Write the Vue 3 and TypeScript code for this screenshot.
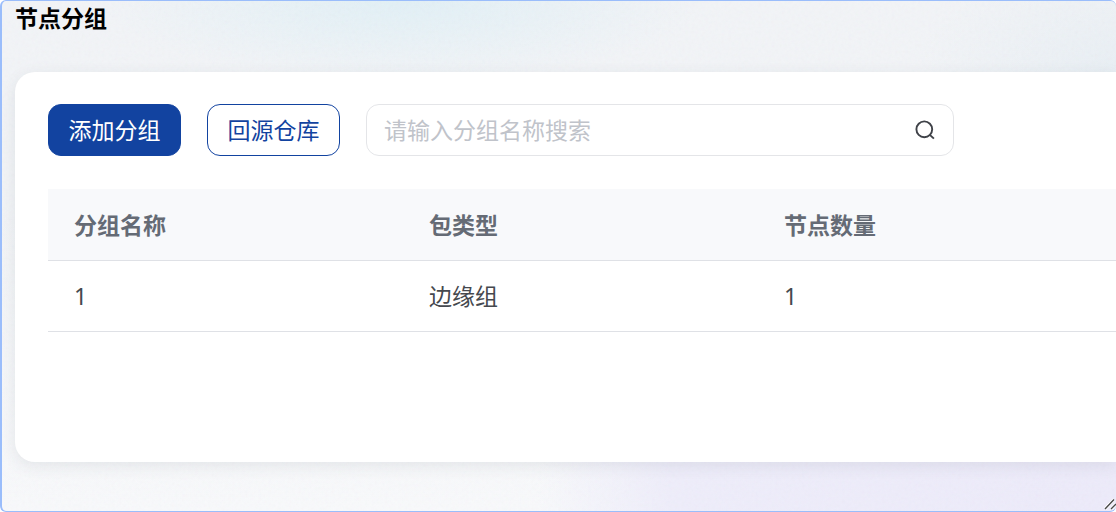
<script setup lang="ts">
import { ref, computed } from 'vue'

interface NodeGroup {
  name: string
  type: string
  count: number
}

const keyword = ref('')
const groups = ref<NodeGroup[]>([{ name: '1', type: '边缘组', count: 1 }])
const visibleGroups = computed(() =>
  groups.value.filter((group) => group.name.includes(keyword.value.trim())),
)
</script>

<template>
  <main class="frame">
    <svg class="grain" aria-hidden="true">
      <filter id="grain-filter">
        <feTurbulence type="fractalNoise" baseFrequency="0.3" numOctaves="2" seed="4" />
      </filter>
      <rect width="100%" height="100%" filter="url(#grain-filter)" />
    </svg>

    <h1 class="title">节点分组</h1>

    <section class="card">
      <form class="toolbar" @submit.prevent>
        <button class="btn primary" type="button">添加分组</button>
        <button class="btn" type="button">回源仓库</button>
        <div class="search">
          <input
            v-model="keyword"
            class="search-input"
            type="text"
            placeholder="请输入分组名称搜索"
            aria-label="请输入分组名称搜索"
          />
          <button class="search-btn" type="submit" aria-label="搜索">
            <svg width="20" height="20" viewBox="0 0 20 20" fill="none" stroke="#3f4248" stroke-width="1.9">
              <circle cx="9.3" cy="9.3" r="7.9" />
              <path d="M14.6 14.6 18.9 18.6" />
            </svg>
          </button>
        </div>
      </form>

      <table class="table">
        <colgroup>
          <col class="col" />
          <col class="col" />
          <col />
        </colgroup>
        <thead>
          <tr>
            <th scope="col">分组名称</th>
            <th scope="col">包类型</th>
            <th scope="col">节点数量</th>
          </tr>
        </thead>
        <tbody>
          <tr v-for="group in visibleGroups" :key="group.name">
            <td>{{ group.name }}</td>
            <td>{{ group.type }}</td>
            <td>{{ group.count }}</td>
          </tr>
        </tbody>
      </table>
    </section>

    <svg class="grip" width="12" height="12" viewBox="0 0 12 12" fill="none" aria-hidden="true">
      <path d="M1 11 10 1.5M7 11 12 6" stroke="#fff" stroke-width="3" />
      <path d="M1 11 10 1.5M7 11 12 6" stroke="#4a4a4a" stroke-width="1.4" />
    </svg>
  </main>
</template>

<style>
body {
  margin: 0;
  background: #fff;
}
</style>

<style scoped>
.frame {
  position: relative;
  isolation: isolate;
  box-sizing: border-box;
  min-height: 100vh;
  padding: 0 0 49px 13px;
  overflow: hidden;
  border: 1px solid #9abdfb;
  border-left-width: 2px;
  border-right: 0;
  border-radius: 6px;
  background:
    radial-gradient(ellipse 300px 80px at 36% 0, #e2f0f6 0%, transparent 100%),
    radial-gradient(ellipse 200px 120px at 100% 14%, #e9eff4 0%, transparent 100%),
    linear-gradient(90deg, transparent 48%, #eeedfa 60%, #edebfa 100%) 0 100% / 100% 110px no-repeat,
    linear-gradient(#f2f4f7 0%, #f2f4f7 40%, #f8f9fb 100%);
  font-family: "Noto Sans", "Noto Sans CJK SC", sans-serif;
  font-size: 23px;
  line-height: 34px;
}

.grain {
  position: absolute;
  z-index: -1;
  inset: 0;
  width: 100%;
  height: 100%;
  opacity: 0.04;
}

.title {
  margin: 0 0 36px;
  color: #000;
  font-size: 23px;
  font-weight: 700;
  line-height: 35px;
}

.card {
  box-sizing: border-box;
  min-height: 390px;
  padding: 32px 0 32px 33px;
  border-radius: 20px 0 0 20px;
  background: #fff;
  box-shadow: 0 4px 16px rgba(40, 50, 70, 0.09);
}

.toolbar {
  display: flex;
  gap: 26px;
  margin-bottom: 33px;
}

.btn {
  box-sizing: border-box;
  min-width: 133px;
  height: 52px;
  padding: 0 16px;
  border: 1px solid #1243a0;
  border-radius: 13px;
  background: #fff;
  color: #1243a0;
  font: inherit;
  white-space: nowrap;
  cursor: pointer;
}

.btn.primary {
  background: #1243a0;
  color: #fff;
}

.search {
  display: flex;
  flex: 0 1 588px;
  align-items: center;
  box-sizing: border-box;
  min-width: 0;
  height: 52px;
  padding: 0 18px 0 17px;
  border: 1px solid #e4e5e8;
  border-radius: 13px;
  background: #fff;
}

.search-input {
  flex: 1;
  min-width: 0;
  padding: 0;
  border: 0;
  outline: 0;
  background: none;
  color: #45484e;
  font: inherit;
}

.search-input::placeholder {
  color: #c0c3ca;
  opacity: 1;
}

.search-btn {
  display: flex;
  padding: 0;
  border: 0;
  background: none;
  cursor: pointer;
}

.table {
  width: 100%;
  table-layout: fixed;
  border-collapse: separate;
  border-spacing: 0;
}

.col {
  width: 355px;
}

.table th,
.table td {
  padding: 18px 26px;
  border-bottom: 1px solid #dfe1e6;
  text-align: left;
}

.table th {
  padding-top: 19px;
  background: #f8f9fb;
  color: #656b75;
  font-weight: 700;
}

.table td {
  color: #45484e;
}

.grip {
  position: absolute;
  right: 0;
  bottom: 1px;
}
</style>
